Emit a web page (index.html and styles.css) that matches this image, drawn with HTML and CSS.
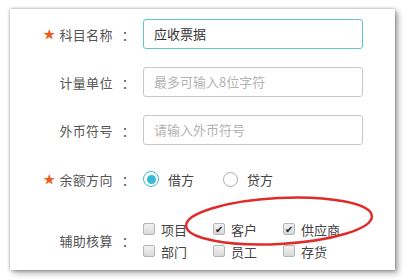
FILE: index.html
```html
<!DOCTYPE html>
<html lang="zh">
<head>
<meta charset="utf-8">
<link rel="stylesheet" href="styles.css">
</head>
<body>
<div class="panel">
  <div class="row r1">
    <div class="label"><span class="star">★</span>科目名称<span class="colon">：</span></div>
    <div class="input focus">应收票据</div>
  </div>
  <div class="row r2">
    <div class="label">计量单位<span class="colon">：</span></div>
    <div class="input ph">最多可输入8位字符</div>
  </div>
  <div class="row r3">
    <div class="label">外币符号<span class="colon">：</span></div>
    <div class="input ph">请输入外币符号</div>
  </div>
  <div class="row r4">
    <div class="label"><span class="star">★</span>余额方向<span class="colon">：</span></div>
    <div class="radios">
      <span class="radio on"></span><span class="rtext">借方</span>
      <span class="radio"></span><span class="rtext">贷方</span>
    </div>
  </div>
  <div class="row r5">
    <div class="label">辅助核算<span class="colon">：</span></div>
    <div class="checks">
      <div class="chk"><span class="box"></span>项目</div>
      <div class="chk"><span class="box on">✔</span>客户</div>
      <div class="chk"><span class="box on">✔</span>供应商</div>
      <div class="chk"><span class="box"></span>部门</div>
      <div class="chk"><span class="box"></span>员工</div>
      <div class="chk"><span class="box"></span>存货</div>
    </div>
  </div>
  <svg class="mark" width="215" height="70" viewBox="0 0 215 70">
    <ellipse cx="104" cy="32" rx="93" ry="23" transform="rotate(-3 104 32)" fill="none" stroke="#e02b2b" stroke-width="2.5"/>
  </svg>
</div>
</body>
</html>
```
FILE: styles.css
```css
html, body {
  margin: 0;
  padding: 0;
  background: #ffffff;
}
body {
  width: 412px;
  height: 280px;
  overflow: hidden;
  font-family: "Noto Sans CJK SC", "Noto Sans", sans-serif;
  font-size: 13px;
  color: #555;
}
.panel {
  position: relative;
  margin: 9px 0 0 10px;
  width: 385px;
  height: 261px;
  background: #fff;
  box-shadow: 0 0 3px rgba(0,0,0,0.35), 3px 3px 6px rgba(0,0,0,0.35);
  padding-top: 10px;
  box-sizing: border-box;
}
.row {
  display: flex;
  align-items: center;
}
.r2, .r3 { margin-top: 18px; }
.r4 { margin-top: 19px; height: 30px; }
.r5 { margin-top: 24px; }
.label {
  width: 125px;
  text-align: right;
  color: #555;
  letter-spacing: 0.3px;
  flex: none;
}
.star {
  color: #f05a1a;
  font-size: 12px;
  margin-right: 4px;
  position: relative;
  top: -1px;
}
.colon {
  margin-left: 9px;
}
.input {
  margin-left: 8px;
  width: 220px;
  height: 30px;
  box-sizing: border-box;
  border: 1px solid #c9c9c9;
  border-radius: 3px;
  padding-left: 10px;
  line-height: 28px;
  color: #333;
}
.input.focus { border-color: #5fc6cd; }
.input.ph { color: #b3b3b3; }
.radios {
  margin-left: 8px;
  display: flex;
  align-items: center;
}
.radio {
  width: 15px;
  height: 15px;
  border: 1px solid #aaa;
  border-radius: 50%;
  box-sizing: border-box;
  position: relative;
  margin-right: 9px;
}
.radio.on { border-color: #3bbcd6; width: 16px; height: 16px; }
.radio.on::after {
  content: "";
  position: absolute;
  left: 2.5px;
  top: 2.5px;
  width: 9px;
  height: 9px;
  border-radius: 50%;
  background: #36b9d6;
}
.rtext { margin-right: 29px; color: #444; }
.checks {
  margin-left: 8px;
  display: grid;
  grid-template-columns: 70px 70px 80px;
  grid-auto-rows: 22px;
}
.chk {
  display: flex;
  align-items: center;
  color: #444;
}
.box {
  width: 12px;
  height: 12px;
  box-sizing: border-box;
  border: 1px solid #b5b5b5;
  border-radius: 2px;
  background: linear-gradient(#f2f2f2, #d9d9d9);
  margin-right: 6px;
  font-size: 10px;
  line-height: 10px;
  text-align: center;
  color: #222;
}
.mark {
  position: absolute;
  left: 165px;
  top: 180px;
}
```
